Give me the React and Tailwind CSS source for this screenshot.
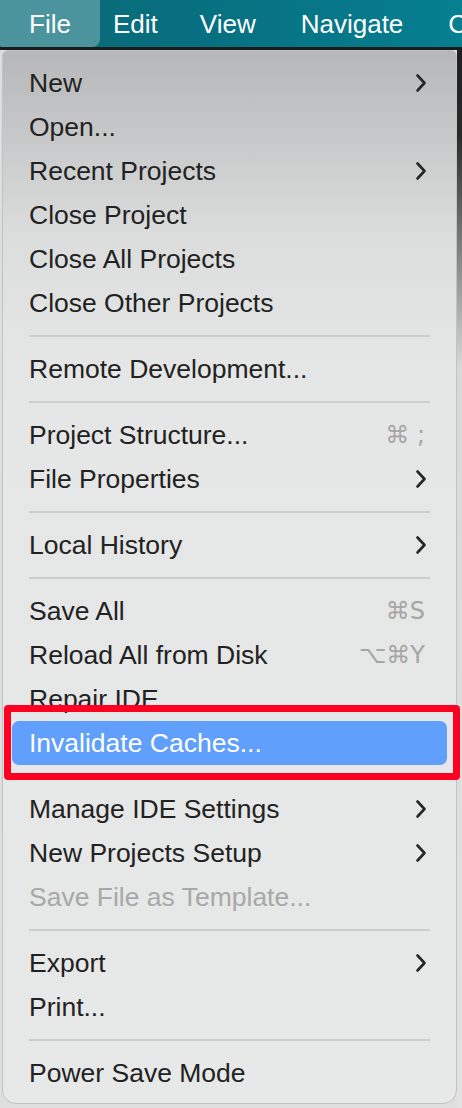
import React from "react";

const FONT = { fontFamily: '"Liberation Sans", Arial, sans-serif' };
const SYM = { fontFamily: '"DejaVu Sans", "Liberation Sans", sans-serif' };

function Chevron() {
  return (
    <svg width="12" height="20" viewBox="0 0 12 20" className="shrink-0">
      <polyline points="2.5,2.5 9.5,10 2.5,17.5" fill="none" stroke="#262626" strokeWidth="2.6" strokeLinecap="round" strokeLinejoin="round" />
    </svg>
  );
}

function Row({ label, sub, shortcut, disabled, active }) {
  return (
    <div className="relative h-[44px] mx-[9px]">
      <div
        className={
          "h-full flex items-center justify-between pl-[17px] rounded-[7px] " +
          (active ? "bg-[#60a0fc] text-white" : disabled ? "text-[#a8a8a8]" : "text-[#222222]") +
          (sub ? " pr-[20px]" : " pr-[22px]")
        }
      >
        <span className="text-[26.5px] leading-none whitespace-nowrap">{label}</span>
        {sub && <Chevron />}
        {shortcut && (
          <span className="text-[24px] leading-none text-[#a6a6a6] whitespace-nowrap" style={SYM}>
            {shortcut}
          </span>
        )}
      </div>
      {active && (
        <div className="absolute left-[-8px] right-[-13px] top-[-16px] bottom-[-15px] border-[7px] border-[#ff0022] rounded-[4px] pointer-events-none" />
      )}
    </div>
  );
}

function Sep({ hidden }) {
  return (
    <div className="h-[22px] flex items-center px-[26px]">
      {!hidden && <div className="h-[2px] w-full bg-[#cdcdcd]" />}
    </div>
  );
}

function TopItem({ label, ml }) {
  return (
    <div className={"shrink-0 flex items-center text-[26px] leading-none font-medium whitespace-nowrap " + ml}>{label}</div>
  );
}

export default function App() {
  return (
    <div className="w-[462px] h-[1108px] overflow-hidden bg-[#dedede] flex flex-col" style={FONT}>
      <div className="h-[47px] shrink-0 flex items-stretch overflow-hidden bg-[linear-gradient(90deg,#0b6876_0%,#076f7f_40%,#067f91_100%)] text-white">
        <div className="w-[100px] shrink-0 pl-[29px] flex items-center rounded-br-[8px] rounded-bl-[2px] bg-[#4b949e]">
          <span className="text-[26px] leading-none font-medium">File</span>
        </div>
        <TopItem label="Edit" ml="ml-[13px]" />
        <TopItem label="View" ml="ml-[42px]" />
        <TopItem label="Navigate" ml="ml-[45px]" />
        <TopItem label="Code" ml="ml-[45px]" />
      </div>
      <div className="h-[3px] shrink-0 bg-[#1b1b1b]" />
      <div className="flex-1 flex">
        <div className="w-[455px] ml-[2px] shrink-0 h-[1054px] rounded-t-[6px] rounded-b-[14px] border border-[#c2c2c2] bg-[linear-gradient(180deg,#b6b7b8_0%,#dcdddd_18%,#e5e6e6_30%,#e7e8e8_100%)] pt-[10px] pb-[8px] flex flex-col">
          <Row label="New" sub />
          <Row label="Open..." />
          <Row label="Recent Projects" sub />
          <Row label="Close Project" />
          <Row label="Close All Projects" />
          <Row label="Close Other Projects" />
          <Sep />
          <Row label="Remote Development..." />
          <Sep />
          <Row label="Project Structure..." shortcut="⌘ ;" />
          <Row label="File Properties" sub />
          <Sep />
          <Row label="Local History" sub />
          <Sep />
          <Row label="Save All" shortcut="⌘S" />
          <Row label="Reload All from Disk" shortcut="⌥⌘Y" />
          <Row label="Repair IDE" />
          <Row label="Invalidate Caches..." active />
          <Sep hidden />
          <Row label="Manage IDE Settings" sub />
          <Row label="New Projects Setup" sub />
          <Row label="Save File as Template..." disabled />
          <Sep />
          <Row label="Export" sub />
          <Row label="Print..." />
          <Sep />
          <Row label="Power Save Mode" />
        </div>
        <div className="flex-1 bg-[linear-gradient(180deg,#1f1f1f_0%,#2a2a2a_8%,#d8d8d8_30%,#e2e2e2_100%)]" />
      </div>
    </div>
  );
}
